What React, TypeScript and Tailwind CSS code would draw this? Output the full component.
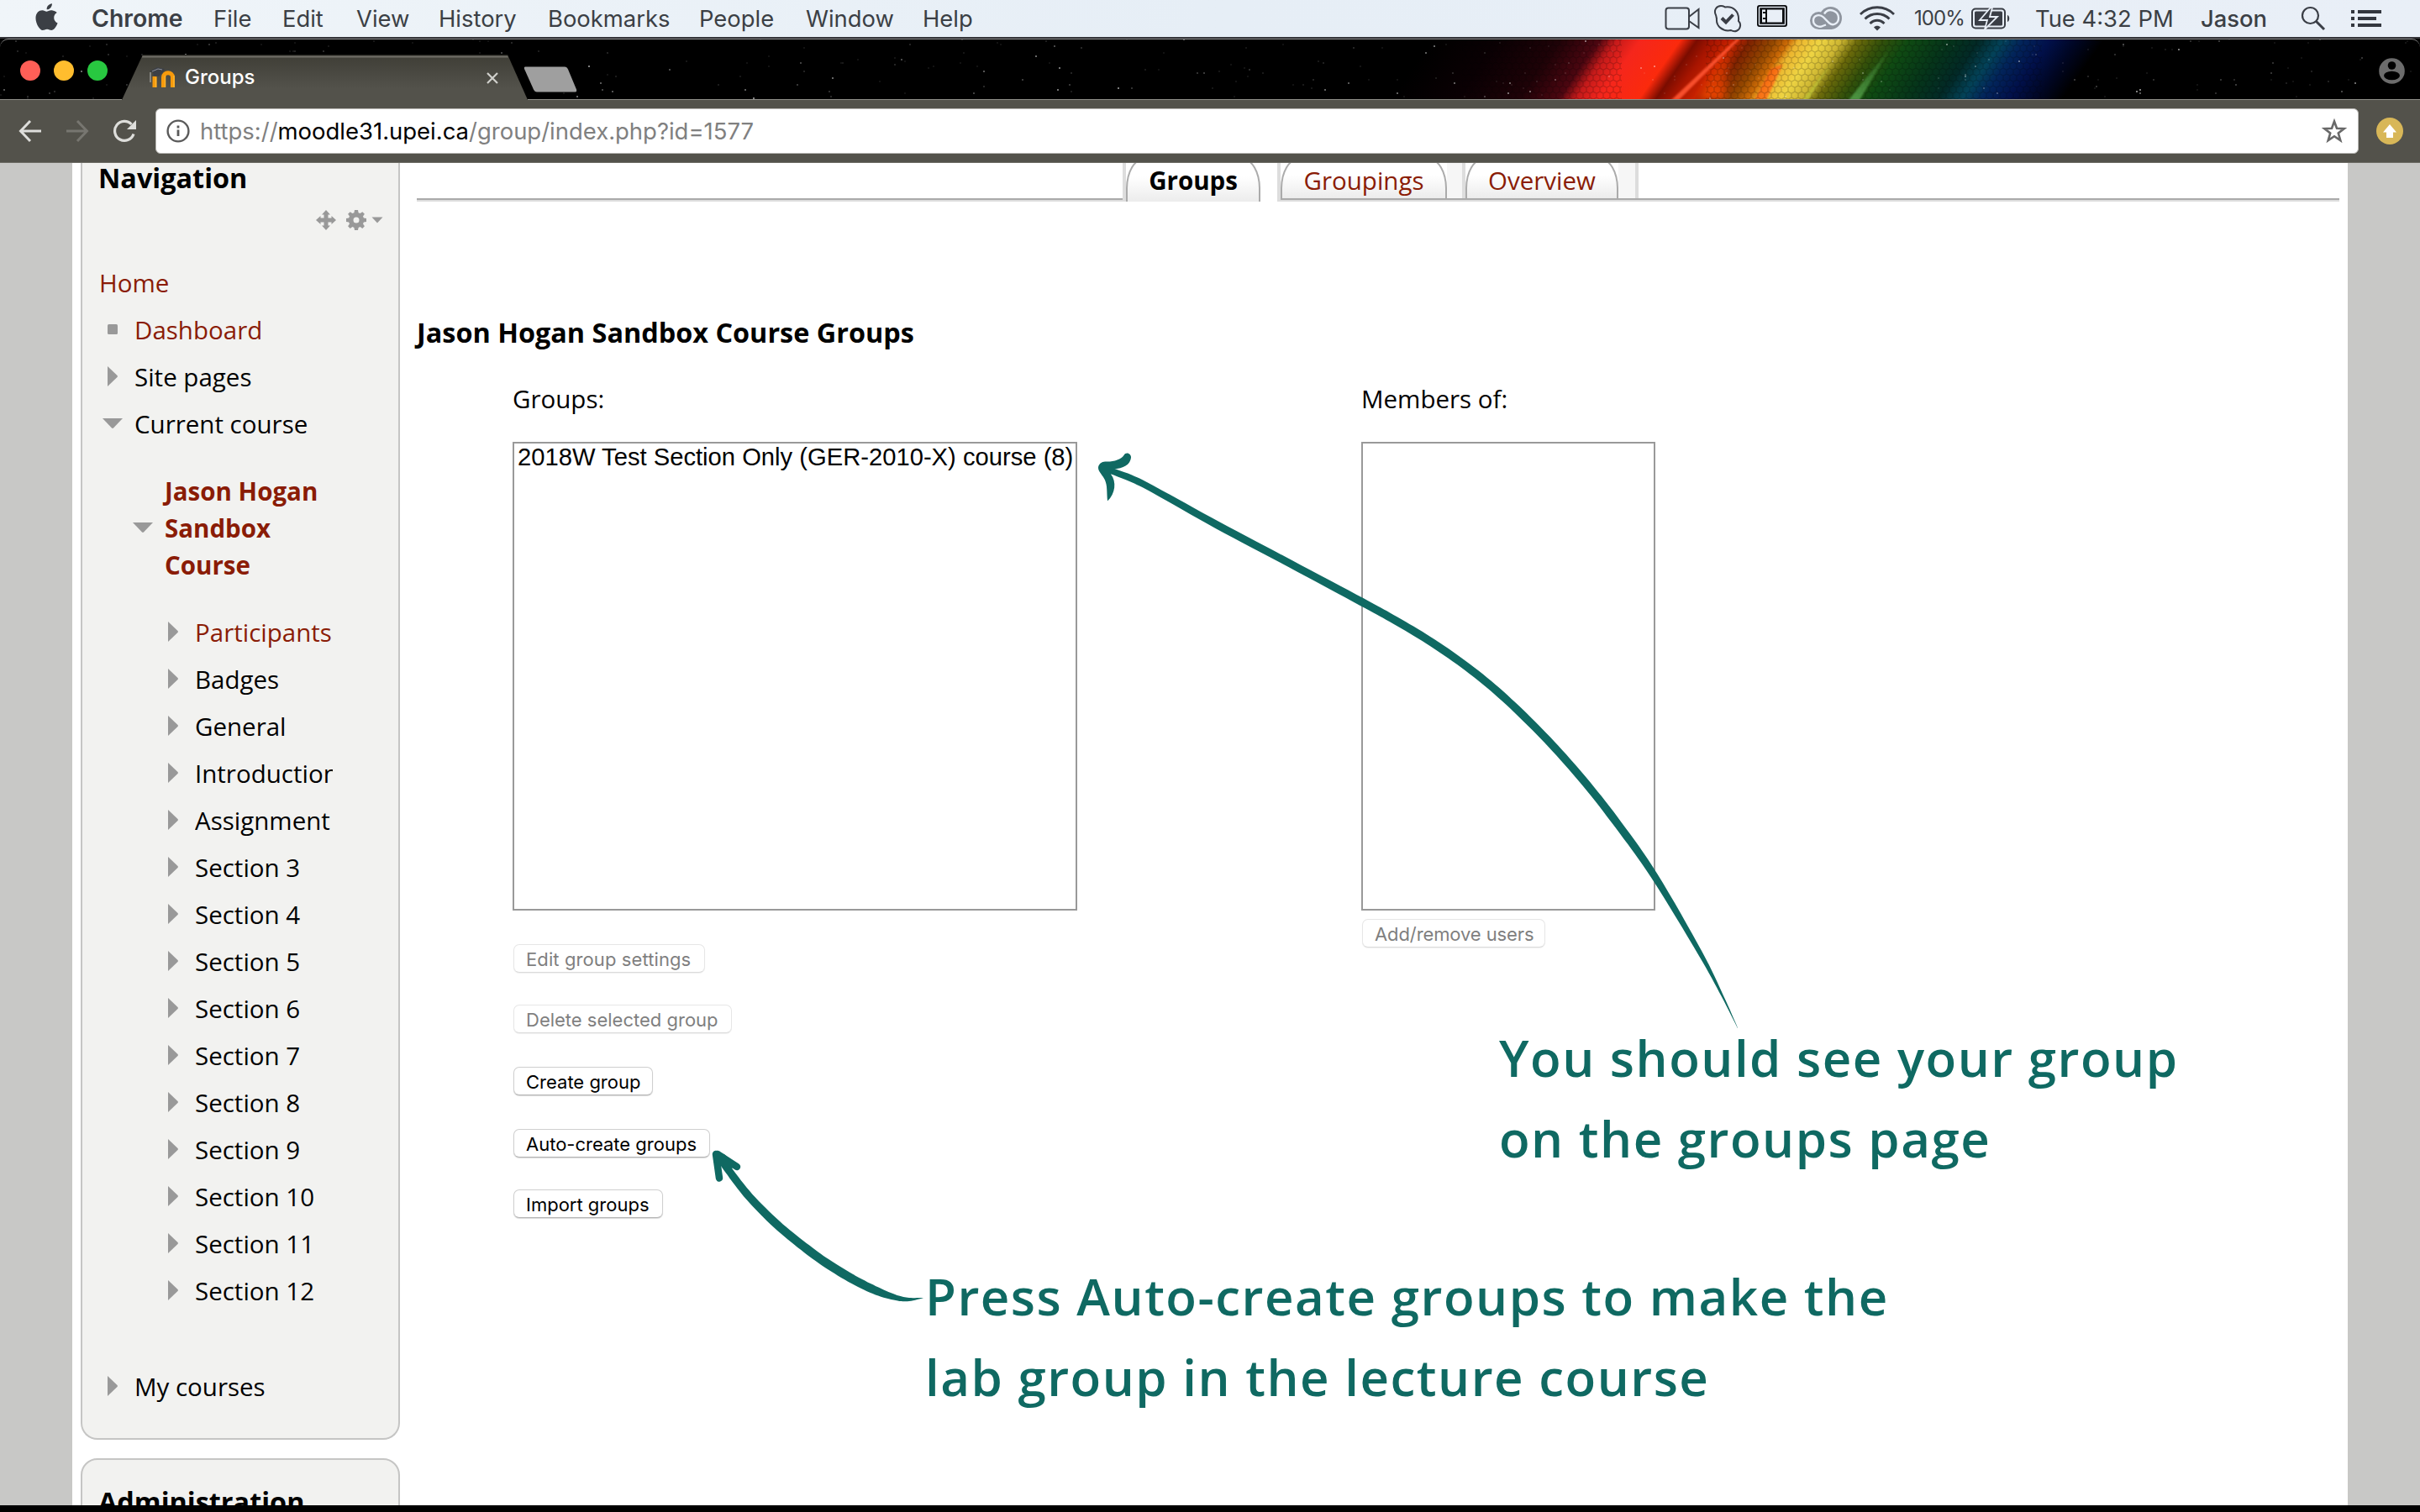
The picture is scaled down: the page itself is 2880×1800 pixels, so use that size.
import React from "react";

type Pt = [number, number, number];

/* Samples a Catmull-Rom spline through [x, y, width] knots and returns a closed brush outline. */
function brush(knots: Pt[]): string {
  const pts: Pt[] = [];
  const at = (i: number) => knots[Math.max(0, Math.min(knots.length - 1, i))];
  for (let i = 0; i < knots.length - 1; i++) {
    const [a, b, c, d] = [at(i - 1), at(i), at(i + 1), at(i + 2)];
    for (let s = 0; s < 8; s++) {
      const t = s / 8;
      const f = (k: 0 | 1 | 2) =>
        0.5 *
        (2 * b[k] +
          (c[k] - a[k]) * t +
          (2 * a[k] - 5 * b[k] + 4 * c[k] - d[k]) * t * t +
          (3 * b[k] - a[k] - 3 * c[k] + d[k]) * t * t * t);
      pts.push([f(0), f(1), Math.max(0, f(2))]);
    }
  }
  pts.push(knots[knots.length - 1]);
  const left: string[] = [];
  const right: string[] = [];
  pts.forEach((p, i) => {
    const q = pts[Math.max(0, i - 1)];
    const r = pts[Math.min(pts.length - 1, i + 1)];
    const dx = r[0] - q[0];
    const dy = r[1] - q[1];
    const n = Math.hypot(dx, dy) || 1;
    const h = p[2] / 2;
    left.push(`${(p[0] - (dy / n) * h).toFixed(1)} ${(p[1] + (dx / n) * h).toFixed(1)}`);
    right.unshift(`${(p[0] + (dy / n) * h).toFixed(1)} ${(p[1] - (dx / n) * h).toFixed(1)}`);
  });
  return `M${left.join("L")}L${right.join("L")}Z`;
}

const longArrow = brush([
  [1312, 557, 7], [1345, 569, 8], [1375, 584, 8], [1449.5, 625.5, 9], [1535.5, 671, 9], [1620.5, 716.5, 9.5],
  [1656, 736, 9.5], [1695, 759, 9.5], [1736.5, 787, 9.5], [1776.6, 818.5, 9.5], [1814, 853, 9.5], [1851, 891, 9.5],
  [1888.6, 934, 9.5], [1926, 982, 9.5], [1969, 1043, 8.5], [2023.5, 1135, 5.5], [2050, 1186, 2.5], [2068, 1224, 0.3],
]);

const shortArrow = brush([
  [853, 1373, 8], [867, 1393, 9], [892, 1425, 9.5], [924.4, 1457.5, 10], [956.5, 1484, 10.5], [984, 1504, 10.5],
  [1016, 1523.5, 10.5], [1043.7, 1537, 9.5], [1066.7, 1545, 6.5], [1082, 1547, 4], [1099, 1545, 0.3],
]);

function makeStars() {
  let seed = 7;
  const rnd = () => (seed = (seed * 16807) % 2147483647) / 2147483647;
  return Array.from({ length: 300 }, () => ({
    x: Math.floor(rnd() * 1440) * 2,
    y: Math.floor(rnd() * 36) * 2,
    o: 0.07 + Math.pow(rnd(), 4) * 0.45,
  }));
}
const stars = makeStars();

const menus: [string, string][] = [
  ["File", "w-[82px]"],
  ["Edit", "w-[88px]"],
  ["View", "w-[98px]"],
  ["History", "w-[130px]"],
  ["Bookmarks", "w-[180px]"],
  ["People", "w-[127px]"],
  ["Window", "w-[139px]"],
  ["Help", "w-[80px]"],
];

function MenuBar() {
  return (
    <div className="flex h-[44px] shrink-0 items-center bg-linear-to-r from-[#f0f5f9] via-[#e6eef6] to-[#e9eff7] font-['Inter',sans-serif] text-[27.4px] leading-[44px] text-[#3b3f45]">
      <svg className="ml-[42px] -mt-[4px] h-[32px] w-[27px]" viewBox="0 0 814 1000" fill="#3b3f45">
        <path d="M788 341c-6 4-108 62-108 190 0 148 130 200 134 202-1 3-21 72-69 142-43 61-88 123-156 123s-86-40-164-40c-77 0-104 41-167 41s-106-57-156-127C44 790 0 666 0 548c0-190 123-290 245-290 64 0 118 43 158 43 39 0 99-45 172-45 28 0 128 3 213 85zM556 161c30-36 52-86 52-136 0-7-1-14-2-20-49 2-107 33-142 73-28 31-53 81-53 132 0 8 1 15 2 18 3 0 8 1 13 1 44 0 99-29 130-68z" />
      </svg>
      <span className="ml-[40px] w-[145px] text-[28.4px] font-semibold">Chrome</span>
      {menus.map(([m, w]) => (
        <span key={m} className={w}>{m}</span>
      ))}
      <div className="ml-auto flex items-center">
        <svg className="h-[28px] w-[42px]" viewBox="0 0 42 28" fill="none" stroke="#3a3e46" strokeWidth="2">
          <rect x="1.5" y="1.5" width="27.5" height="25" rx="3" />
          <path d="M29 12L40.5 3v22L29 17" />
        </svg>
        <svg className="ml-[16px] h-[34px] w-[34px] -mt-[1px]" viewBox="0 0 34 34" fill="none" stroke="#3a3e46">
          <path strokeWidth="2" d="M3 13C0 7 4 2 9 2c3 0 4 1 5 1.500C24 2 31 9 30 20c1 1 2.500 3 2 6-.5 5-6 8-11 5C11 33 3 26 4 17 3.500 16 3.500 14 3 13z" />
          <path strokeWidth="4" d="M10 16.500l5 5 8.500-9" />
        </svg>
        <svg className="ml-[17px] h-[28px] w-[38px] -mt-[6px]" viewBox="0 0 38 28">
          <rect x="1" y="1" width="36" height="26" rx="3" fill="#0b0d10" />
          <rect x="3.500" y="3.500" width="31" height="21" rx="1" fill="none" stroke="#dfe6ee" strokeWidth="1.400" />
          <rect x="7" y="6.500" width="24" height="15" fill="#e9eff7" />
          <path d="M12 6v16M8 10h4M8 17h4" stroke="#0b0d10" strokeWidth="2" />
        </svg>
        <svg className="ml-[25px] h-[29px] w-[40px] -mt-[2px]" viewBox="0 0 40 29">
          <circle cx="11.500" cy="17.500" r="10.500" fill="#8f959f" />
          <circle cx="25.500" cy="14.500" r="13.500" fill="#8f959f" />
          <rect x="11" y="20" width="16" height="8" fill="#8f959f" />
          <path d="M20 22.500l-4 1.500c-4 2-11-.5-11-6.500 0-7 8-8 12-4l7 7c5 4 11 0 11-6 0-9-12-13-17-5" fill="none" stroke="#e9eff7" strokeWidth="2.400" />
        </svg>
        <svg className="ml-[19px] mr-[1px] h-[30px] w-[44px]" viewBox="0 0 44 30" fill="none" stroke="#3a3e46" strokeWidth="2.800">
          <path d="M2 10C13-1 31-1 42 10M7.500 15.500c8-8 21-8 29 0M13.500 21c5-5 12-5 17 0" />
          <path d="M18 25.500c2-2.500 6-2.500 8 0l-4 4z" fill="#3a3e46" stroke="none" />
        </svg>
        <span className="ml-[21px] w-[68px] text-[24px] tracking-[-0.9px]">100%</span>
        <svg className="h-[26px] w-[46px]" viewBox="0 0 46 26">
          <rect x="1" y="1.500" width="39" height="23" rx="4" fill="none" stroke="#3a3e46" strokeWidth="2" />
          <rect x="4" y="4.500" width="33" height="17" rx="1.500" fill="#3a3e46" />
          <path d="M43 9c3 1 3 7 0 8z" fill="#3a3e46" />
          <path d="M23 0L10 15h9l-3 11 15-15h-9l3-11z" fill="#3a3e46" stroke="#e9eff7" strokeWidth="1.800" />
        </svg>
        <span className="ml-[30px] w-[197px]">Tue 4:32 PM</span>
        <span className="w-[119px] font-medium">Jason</span>
        <svg className="h-[30px] w-[30px]" viewBox="0 0 30 30" fill="none" stroke="#3a3e46">
          <circle cx="11.500" cy="11.500" r="9.500" strokeWidth="2.200" />
          <path d="M18.500 18.500l9.500 9.500" strokeWidth="3" />
        </svg>
        <svg className="mr-[46px] ml-[30px] h-[20px] w-[36px]" viewBox="0 0 36 20" fill="#33373f">
          <path d="M0 0h4v4H0zM8 0h28v4H8zM0 8h4v4H0zM8 8h22v4H8zM0 16h4v4H0zM8 16h28v4H8z" />
        </svg>
      </div>
    </div>
  );
}

function ThemeArt() {
  return (
    <svg className="absolute inset-0 h-[73px] w-[2880px]" viewBox="0 0 2880 73">
      <defs>
        <linearGradient id="spectrum" gradientUnits="userSpaceOnUse" x1="1680" y1="0" x2="2480" y2="0">
          <stop offset="0" stopColor="#000000" />
          <stop offset="0.100" stopColor="#0a0003" />
          <stop offset="0.190" stopColor="#1e0207" />
          <stop offset="0.250" stopColor="#4c0610" />
          <stop offset="0.275" stopColor="#c41a1a" />
          <stop offset="0.310" stopColor="#f5261c" />
          <stop offset="0.370" stopColor="#fb2a0c" />
          <stop offset="0.395" stopColor="#7a0c00" />
          <stop offset="0.420" stopColor="#a81500" />
          <stop offset="0.450" stopColor="#c62200" />
          <stop offset="0.475" stopColor="#7e2200" />
          <stop offset="0.510" stopColor="#944800" />
          <stop offset="0.532" stopColor="#cc6a06" />
          <stop offset="0.547" stopColor="#ecb52e" />
          <stop offset="0.580" stopColor="#eed443" />
          <stop offset="0.610" stopColor="#cdb632" />
          <stop offset="0.635" stopColor="#6c6a0a" />
          <stop offset="0.670" stopColor="#34500a" />
          <stop offset="0.710" stopColor="#0f4a12" />
          <stop offset="0.770" stopColor="#05341a" />
          <stop offset="0.815" stopColor="#022926" />
          <stop offset="0.850" stopColor="#034258" />
          <stop offset="0.880" stopColor="#02245a" />
          <stop offset="0.920" stopColor="#01104a" />
          <stop offset="0.960" stopColor="#000624" />
          <stop offset="1" stopColor="#000000" />
        </linearGradient>
        <linearGradient id="ember" x1="0" y1="0" x2="0" y2="1">
          <stop offset="0" stopColor="#ff4a00" stopOpacity="0" />
          <stop offset="1" stopColor="#ff4a00" stopOpacity="0.900" />
        </linearGradient>
        <linearGradient id="beam" x1="0" y1="0" x2="0" y2="1">
          <stop offset="0" stopColor="#58b050" stopOpacity="0" />
          <stop offset="1" stopColor="#58a850" stopOpacity="0.800" />
        </linearGradient>
        <pattern id="hex" width="8" height="14" patternUnits="userSpaceOnUse">
          <path d="M4 0l4 2.300v4.700L4 9.300 0 7V2.300zM4 9.300V14" fill="none" stroke="#000" strokeOpacity="0.200" strokeWidth="1.200" />
        </pattern>
        <filter id="soft" x="-50%" y="-20%" width="200%" height="140%">
          <feGaussianBlur stdDeviation="5" />
        </filter>
        <filter id="slight">
          <feGaussianBlur stdDeviation="0.800" />
        </filter>
      </defs>
      <rect width="2880" height="73" fill="#000" />
      <g transform="translate(25 0) skewX(-35)">
        <rect x="1680" width="800" height="73" fill="url(#spectrum)" />
      </g>
      <path d="M2062 0L2056 0L2022 73H2052z" fill="url(#ember)" filter="url(#soft)" />
      <path d="M2107 36L2088 73H2102L2122 30z" fill="#ff5a10" opacity="0.700" filter="url(#slight)" />
      <rect x="1740" width="190" height="73" fill="url(#hex)" />
      <rect x="2030" width="400" height="73" fill="url(#hex)" />
      <path d="M2067 0h4L1998 73h-9z" fill="#ff5433" opacity="0.900" filter="url(#slight)" />
      <path d="M2252 8L2213 73h-13z" fill="url(#beam)" filter="url(#slight)" />
      <path d="M2180 28L2152 73h-7z" fill="#c9d23c" opacity="0.600" filter="url(#slight)" />
      {stars.map((s, i) => (
        <rect key={i} x={s.x} y={s.y} width="2" height="2" fill="#fff" opacity={s.o} />
      ))}
    </svg>
  );
}

function TabStrip() {
  return (
    <div className="relative h-[73px] shrink-0 overflow-hidden">
      <ThemeArt />
      <div className="relative flex h-[73px] rounded-t-[10px] border-t border-[#8c8c8c]">
        <div className="mt-[25px] ml-[24px] flex h-[24px] w-[121px] gap-[16px]">
          <i className="size-[24px] rounded-full bg-[#ff5f57]" />
          <i className="size-[24px] rounded-full bg-[#ffbd2e]" />
          <i className="size-[24px] rounded-full bg-[#28c840]" />
        </div>
        <div className="relative mt-[18px] h-[54px] w-[484px]">
          <svg className="absolute inset-0 h-[54px] w-[484px]" viewBox="0 0 484 54">
            <defs>
              <linearGradient id="tabfill" x1="0" y1="0" x2="0" y2="1">
                <stop offset="0" stopColor="#3f3e36" />
                <stop offset="0.750" stopColor="#53524b" />
              </linearGradient>
            </defs>
            <path d="M0 54L25 0h434l24 54z" fill="url(#tabfill)" />
            <path d="M25 0h434v1.500H25z" fill="#24241f" />
            <path d="M24.500 1.500h434.500l1 2H24z" fill="#716f68" />
          </svg>
          <div className="relative flex h-[54px] items-center pl-[33px]">
            <svg className="h-[25px] w-[31px]" viewBox="0 0 31 25">
              <path d="M6 24V11M16.500 24V12c0-7 11-7 11 0v12" fill="none" stroke="#f79a0c" strokeWidth="5" />
              <path d="M7.500 12v12M18.500 10v14M29 10v14" stroke="#ffb52e" strokeWidth="1.500" />
              <path d="M0 5L9 0l9 2-3 5-4 4-6-1-1-4z" fill="#3c3f46" />
              <path d="M1 6v12" stroke="#9a9a96" strokeWidth="1.500" />
              <path d="M3 5l7-3 5 1" stroke="#8b8f98" strokeWidth="1" fill="none" />
            </svg>
            <span className="ml-[11px] w-[360px] text-[24px] leading-[48px] font-medium text-white">Groups</span>
            <svg className="absolute left-[434px] top-[21px] h-[14px] w-[14px]" viewBox="0 0 14 14" stroke="#d0d0cc" strokeWidth="2.200">
              <path d="M1 1l12 12M13 1L1 13" />
            </svg>
          </div>
        </div>
        <svg className="mt-[32px] -ml-[6px] h-[31px] w-[64px]" viewBox="0 0 64 31">
          <path d="M2 .5h47c2 0 3 1 4 3l10 24c.6 2 0 3-2 3H16c-2 0-3-1-4-3L1 3C.5 1.500 1 .5 2 .5z" fill="#9f9f9f" />
        </svg>
        <svg className="ml-auto mr-[18px] mt-[22px] h-[31px] w-[31px]" viewBox="0 0 31 31">
          <circle cx="15.500" cy="15.500" r="15.300" fill="#6c6c6c" />
          <circle cx="15.500" cy="9" r="4.800" fill="#000" />
          <ellipse cx="15.500" cy="21" rx="9.500" ry="5.200" fill="#000" />
        </svg>
      </div>
      <div className="absolute bottom-0 left-0 h-px w-[145px] bg-[#8f8e89]" />
      <div className="absolute bottom-0 right-0 h-px w-[2252px] bg-[#8f8e89]" />
    </div>
  );
}

function Toolbar() {
  return (
    <div className="flex h-[75px] shrink-0 items-center border-b border-[#6b6a63] bg-[#53524b] pb-[1px]">
      <svg className="ml-[22px] h-[28px] w-[28px]" viewBox="0 0 28 28" fill="none" stroke="#dededb" strokeWidth="3">
        <path d="M27 14H3M14 2L2.500 14 14 26" />
      </svg>
      <svg className="ml-[28px] h-[28px] w-[28px]" viewBox="0 0 28 28" fill="none" stroke="#777670" strokeWidth="3">
        <path d="M1 14h24M14 2l11.500 12L14 26" />
      </svg>
      <svg className="ml-[28px] h-[28px] w-[30px]" viewBox="0 0 30 28">
        <path d="M25 17.500A11.500 11.500 0 1 1 22.500 6" fill="none" stroke="#dededb" strokeWidth="3.200" />
        <path d="M28 1v11H17z" fill="#dededb" />
      </svg>
      <div className="ml-[21px] flex h-[54px] w-[2622px] items-center rounded-[6px] border border-[#b9b8b4] bg-white text-[27.500px] leading-[54px] text-[#808080]">
        <svg className="ml-[12px] h-[28px] w-[28px]" viewBox="0 0 28 28">
          <circle cx="14" cy="14" r="12.400" fill="none" stroke="#5a5a5a" strokeWidth="2.400" />
          <path d="M12.600 12.500h2.800V20h-2.800zM12.600 7.500h2.800v3h-2.800z" fill="#5a5a5a" />
        </svg>
        <span className="ml-[12px] pt-[1px] tracking-[-0.02px] whitespace-nowrap">
          https://<span className="text-black">moodle31.upei.ca</span>/group/index.php?id=1577
        </span>
        <svg className="ml-auto mr-[13px] h-[30px] w-[30px]" viewBox="0 0 30 30">
          <path d="M15 3.500l3 8.300 8.800.3-7 5.500 2.500 8.500L15 21.200l-7.300 4.900 2.500-8.500-7-5.500 8.800-.3z" fill="none" stroke="#686868" strokeWidth="2.600" />
        </svg>
      </div>
      <svg className="ml-[21px] h-[32px] w-[32px]" viewBox="0 0 32 32">
        <circle cx="16" cy="16" r="16" fill="#d8b758" />
        <path d="M16 8l8 9.500h-4V24h-8v-6.500H8z" fill="#fff" />
      </svg>
    </div>
  );
}

function Mark({ kind }: { kind: "right" | "down" | "square" }) {
  return (
    <svg className="mr-[14px] -mt-[2px] h-[24px] w-[24px] shrink-0" viewBox="0 0 24 24" fill="#999999">
      {kind === "right" && <path d="M6 0l11.500 11c.6.6.6 1.400 0 2L6 24z" />}
      {kind === "down" && <path d="M0 6h24L13 17.500c-.6.600-1.400.600-2 0z" />}
      {kind === "square" && <rect x="6" y="6" width="12" height="12" rx="1.500" />}
    </svg>
  );
}

const sections = [
  "Participants", "Badges", "General", "Introduction", "Assignment", "Section 3", "Section 4", "Section 5", "Section 6",
  "Section 7", "Section 8", "Section 9", "Section 10", "Section 11", "Section 12",
];

function Sidebar() {
  return (
    <div className="w-[380px] shrink-0">
      <div className="h-[1520px] rounded-b-[20px] border-2 border-t-0 border-[#c5c5c4] bg-[#f2f2f0]">
        <h2 className="ml-[19px] h-[35px] text-[32.400px] leading-[35px] font-bold text-black">Navigation</h2>
        <div className="flex h-[66px] items-center justify-end pr-[18px]">
          <svg className="h-[24px] w-[24px]" viewBox="0 0 24 24" fill="#999">
            <path d="M12 0l5 5.500h-2.500v4h4V7L24 12l-5.500 5v-2.500h-4v4H17L12 24l-5-5.500h2.500v-4h-4V17L0 12l5.500-5v2.500h4v-4H7z" />
          </svg>
          <svg className="ml-[12px] h-[24px] w-[24px]" viewBox="0 0 24 24">
            <path fill="#999" fillRule="evenodd" d="M10 0h4l.6 3.200 2 .9L19.300 2.200l2.600 2.600-1.900 2.700.9 2L24 10v4l-3.100.6-.9 2 1.900 2.600-2.600 2.700-2.700-1.900-2 .9L14 24h-4l-.6-3.100-2-.9-2.700 1.900-2.600-2.700L4 16.600l-.9-2L0 14v-4l3.100-.5.9-2-1.900-2.700 2.600-2.600L7.400 4.100l2-.9zM12 8.500a3.500 3.500 0 1 0 0 7 3.500 3.500 0 0 0 0-7z" />
          </svg>
          <svg className="ml-[6px] h-[8px] w-[14px] -mt-[1px]" viewBox="0 0 14 8" fill="#999">
            <path d="M.5.500h13L7 7.500z" />
          </svg>
        </div>
        <div className="mt-[14px] ml-[24px] text-[29.500px] leading-[56px] text-black">
          <div className="-ml-[4px] h-[56px] text-[#8a1c06]">Home</div>
          <div className="flex h-[56px] items-center text-[#8a1c06]"><Mark kind="square" />Dashboard</div>
          <div className="flex h-[56px] items-center"><Mark kind="right" />Site pages</div>
          <div className="flex h-[56px] items-center"><Mark kind="down" />Current course</div>
          <div className="mt-[30px] ml-[36px] flex items-center leading-[44px] font-bold text-[#8a1c06]">
            <Mark kind="down" />
            <div>Jason Hogan<br />Sandbox<br />Course</div>
          </div>
          <div className="mt-[30px] ml-[72px]">
            {sections.map((s, i) => (
              <div key={s} className={i === 0 ? "flex h-[56px] items-center text-[#8a1c06]" : "flex h-[56px] items-center"}>
                <Mark kind="right" />
                <span className="w-[164px] overflow-hidden whitespace-nowrap">{s}</span>
              </div>
            ))}
          </div>
          <div className="mt-[58px] flex h-[56px] items-center"><Mark kind="right" />My courses</div>
        </div>
      </div>
      <div className="mt-[22px] h-[120px] rounded-[20px] border-2 border-[#c5c5c4] bg-[#f2f2f0] pt-[32px] pl-[19px] text-[32.400px] leading-[35px] font-bold text-black">
        Administration
      </div>
    </div>
  );
}

function PageTab({ label, className }: { label: string; className: string }) {
  return (
    <div className={`-mt-[6px] rounded-t-[22px_36px] border-2 border-b-0 border-[#ababab] bg-linear-to-b from-white from-40% to-[#ececec] pt-[5px] text-center leading-[40px] ${className}`}>
      {label}
    </div>
  );
}

function PageTabs() {
  return (
    <div className="flex h-[46px] overflow-hidden text-[29.500px]">
      <div className="w-[840px] border-b-2 border-[#dddddd]">
        <div className="h-[44px] border-b-2 border-[#aaaaaa]" />
      </div>
      <div className="w-[4px] bg-[#dddddd]" />
      <PageTab label="Groups" className="h-[52px] w-[160px] font-bold text-black" />
      <div className="w-[20px]" />
      <div className="w-[4px] bg-[#dddddd]" />
      <div className="w-[1260px] border-b-2 border-[#dddddd]">
        <div className="flex h-[44px] border-b-2 border-[#aaaaaa]">
          <PageTab label="Groupings" className="h-[48px] w-[198px] text-[#8a1c06]" />
          <div className="w-[18px] bg-[#f6f6f6]" />
          <div className="w-[4px] bg-[#dddddd]" />
          <PageTab label="Overview" className="h-[48px] w-[182px] text-[#8a1c06]" />
          <div className="w-[20px] bg-[#f6f6f6]" />
          <div className="w-[4px] bg-[#dddddd]" />
        </div>
      </div>
    </div>
  );
}

function Btn({ label, className, disabled }: { label: string; className: string; disabled?: boolean }) {
  return (
    <button
      disabled={disabled}
      className={`block h-[34px] rounded-[7px] border bg-white pl-[14px] text-left font-['Inter',sans-serif] text-[22px] leading-[34px] whitespace-nowrap ${
        disabled
          ? "border-[#e6e6e6] border-b-[#dadada] text-[#7f7f7f] shadow-[0_1px_1px_rgba(0,0,0,0.06)]"
          : "border-[#cfcfcf] border-b-[#b4b4b4] text-black shadow-[0_1px_1px_rgba(0,0,0,0.15)]"
      } ${className}`}
    >
      {label}
    </button>
  );
}

function Main() {
  return (
    <div className="ml-[20px] w-[2288px]">
      <PageTabs />
      <h1 className="mt-[133px] h-[44px] text-[32.400px] leading-[44px] font-bold text-black">Jason Hogan Sandbox Course Groups</h1>
      <div className="mt-[37px] flex pl-[114px] text-[29.500px] text-black">
        <div className="w-[1010px]">
          <div className="h-[40px] leading-[42px]">Groups:</div>
          <div className="mt-[32px] h-[558px] w-[672px] border-2 border-[#999999] bg-white pl-[4px] font-['Liberation_Sans',sans-serif] text-[29.200px] leading-[32px] whitespace-nowrap">
            2018W Test Section Only (GER-2010-X) course (8)
          </div>
          <div className="ml-[1px]">
            <Btn disabled label="Edit group settings" className="mt-[40px] w-[228px] tracking-[0.1px]" />
            <Btn disabled label="Delete selected group" className="mt-[38px] w-[260px]" />
            <Btn label="Create group" className="mt-[40px] w-[166px]" />
            <Btn label="Auto-create groups" className="mt-[40px] w-[234px]" />
            <Btn label="Import groups" className="mt-[38px] w-[178px]" />
          </div>
        </div>
        <div>
          <div className="h-[40px] leading-[42px]">Members of:</div>
          <div className="mt-[32px] h-[558px] w-[350px] border-2 border-[#999999] bg-white" />
          <Btn disabled label="Add/remove users" className="mt-[10px] ml-[1px] w-[218px] tracking-[-0.1px]" />
        </div>
      </div>
    </div>
  );
}

function Annotations() {
  return (
    <>
      <svg className="absolute top-0 left-0 h-[1598px] w-[2880px]" viewBox="0 194 2880 1598" fill="#0f6962">
        <path d={longArrow} />
        <path d="M1307 557c0-5 5-8 9-7.500 9 .5 18-2.500 21.500-7.500 3-5 9-1.500 8.500 3-1 8-9 13-21 13.500l-3 6c7 9 5.500 23-4 32-1-11 0-18-3-25-2-5-8-10-8-14.500z" />
        <path d={shortArrow} />
        <path d="M852 1374L856 1402.500M854 1374L877 1389" fill="none" stroke="#0f6962" strokeWidth="8.500" strokeLinecap="round" />
        <path d="M850 1371l12 3 14 14-9 5-8-6-5 6z" />
      </svg>
      <div className="absolute top-[1017px] left-[1784px] text-[60px] leading-[96px] font-semibold tracking-[1.500px] whitespace-nowrap text-[#0f6962]">
        You should see your group<br />on the groups page
      </div>
      <div className="absolute top-[1301px] left-[1101px] text-[60px] leading-[96px] font-semibold tracking-[1.500px] whitespace-nowrap text-[#0f6962]">
        Press Auto-create groups to make the<br />lab group in the lecture course
      </div>
    </>
  );
}

export default function App() {
  return (
    <div className="flex h-[1800px] w-[2880px] flex-col overflow-hidden bg-black font-['Inter',sans-serif]">
      <MenuBar />
      <div className="h-[2px] shrink-0 bg-[#35353a]" />
      <TabStrip />
      <Toolbar />
      <div className="relative flex h-[1598px] shrink-0 justify-start overflow-hidden bg-[#c8c8c6] pl-[86px] font-['Open_Sans',sans-serif]">
        <div className="flex h-full w-[2708px] bg-white pl-[10px]">
          <Sidebar />
          <Main />
        </div>
        <Annotations />
      </div>
    </div>
  );
}
